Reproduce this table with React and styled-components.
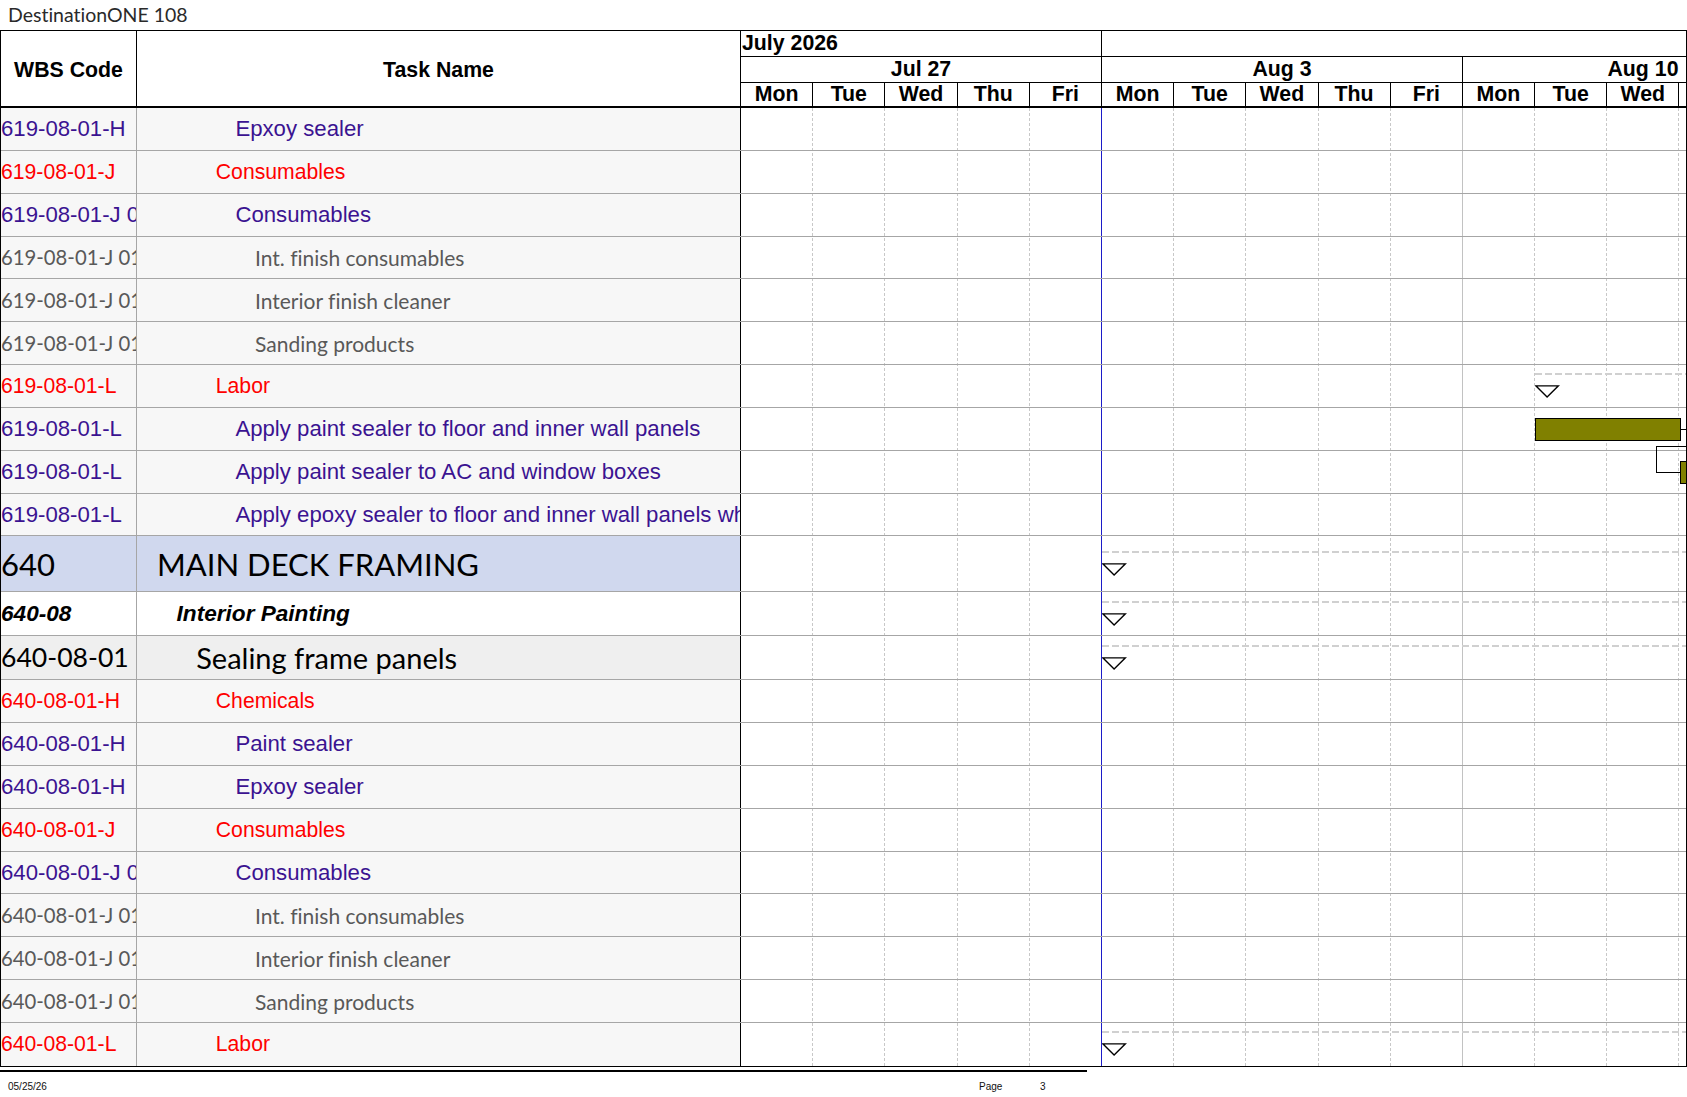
import styled, { createGlobalStyle } from "styled-components";

const DAY_W = 72.2;
const WEEK_W = DAY_W * 5;
const ROW_H = 42.85;
const ARIAL = `"Liberation Sans", Arial, sans-serif`;
const CALIBRI = `Lato, "Open Sans", sans-serif`;

const weeks = ["Jul 27", "Aug 3", "Aug 10"];
const dayNames = ["Mon", "Tue", "Wed", "Thu", "Fri"];
const STATUS_DAY = 5;

const kinds = {
  resource: { font: ARIAL, size: 22.2, color: "#3b1391", bg: "#f7f7f7" },
  group: { font: ARIAL, size: 21.2, color: "#ff0000", bg: "#f7f7f7" },
  item: { font: CALIBRI, size: 21, wbsSize: 20.3, color: "#595959", bg: "#f7f7f7" },
  phase: { font: CALIBRI, size: 31, color: "#000", bg: "#d0d8ee", h: 56 },
  area: { font: ARIAL, size: 22.6, color: "#000", bg: "#fff", h: 43.3, weight: 700, italic: true },
  task: { font: CALIBRI, size: 29, wbsSize: 26.6, color: "#000", bg: "#efefef", h: 44.5 },
};

const rows = [
  { wbs: "619-08-01-H", name: "Epxoy sealer", kind: "resource", level: 5 },
  { wbs: "619-08-01-J", name: "Consumables", kind: "group", level: 4 },
  { wbs: "619-08-01-J 01", name: "Consumables", kind: "resource", level: 5 },
  { wbs: "619-08-01-J 01-01", name: "Int. finish consumables", kind: "item", level: 6 },
  { wbs: "619-08-01-J 01-02", name: "Interior finish cleaner", kind: "item", level: 6 },
  { wbs: "619-08-01-J 01-03", name: "Sanding products", kind: "item", level: 6 },
  { wbs: "619-08-01-L", name: "Labor", kind: "group", level: 4, summary: 11 },
  { wbs: "619-08-01-L", name: "Apply paint sealer to floor and inner wall panels", kind: "resource", level: 5, bar: [11, 13] },
  { wbs: "619-08-01-L", name: "Apply paint sealer to AC and window boxes", kind: "resource", level: 5, bar: [13, 16] },
  { wbs: "619-08-01-L", name: "Apply epoxy sealer to floor and inner wall panels where needed", kind: "resource", level: 5 },
  { wbs: "640", name: "MAIN DECK FRAMING", kind: "phase", level: 1, summary: 5 },
  { wbs: "640-08", name: "Interior Painting", kind: "area", level: 2, summary: 5 },
  { wbs: "640-08-01", name: "Sealing frame panels", kind: "task", level: 3, summary: 5 },
  { wbs: "640-08-01-H", name: "Chemicals", kind: "group", level: 4 },
  { wbs: "640-08-01-H", name: "Paint sealer", kind: "resource", level: 5 },
  { wbs: "640-08-01-H", name: "Epxoy sealer", kind: "resource", level: 5 },
  { wbs: "640-08-01-J", name: "Consumables", kind: "group", level: 4 },
  { wbs: "640-08-01-J 01", name: "Consumables", kind: "resource", level: 5 },
  { wbs: "640-08-01-J 01-01", name: "Int. finish consumables", kind: "item", level: 6 },
  { wbs: "640-08-01-J 01-02", name: "Interior finish cleaner", kind: "item", level: 6 },
  { wbs: "640-08-01-J 01-03", name: "Sanding products", kind: "item", level: 6 },
  { wbs: "640-08-01-L", name: "Labor", kind: "group", level: 4, summary: 5 },
];

const heightOf = (row) => kinds[row.kind].h || ROW_H;
const rowTops = rows.reduce((acc, row, i) => {
  acc.push(i === 0 ? 0 : acc[i - 1] + heightOf(rows[i - 1]));
  return acc;
}, []);

const GlobalStyle = createGlobalStyle`
  html, body {
    margin: 0;
    padding: 0;
    background: #fff;
  }
  body {
    font-family: ${ARIAL};
    color: #000;
    font-variant-ligatures: none;
  }
  * {
    box-sizing: border-box;
  }
`;

const Page = styled.div`
  width: 1687px;
`;

const Title = styled.div`
  height: 30px;
  line-height: 30px;
  padding-left: 8px;
  font-family: ${CALIBRI};
  font-size: 19.5px;
  color: #2a2a2a;
`;

const Sheet = styled.div`
  display: flex;
  width: 1687px;
  border: 1px solid #000;
`;

const LeftPane = styled.div`
  width: 740px;
  flex-shrink: 0;
  display: flex;
  flex-direction: column;
`;

const LeftHead = styled.div`
  display: flex;
  height: 77px;
  border-bottom: 2px solid #000;
`;

const HeadCell = styled.div`
  width: ${(p) => p.$w}px;
  border-right: 1px solid #000;
  display: flex;
  align-items: center;
  justify-content: center;
  padding-top: 3px;
  font-family: ${ARIAL};
  font-weight: 700;
  font-size: 21.3px;
`;

const LeftRow = styled.div`
  display: flex;
  height: ${(p) => p.$h}px;
  background: ${(p) => p.$k.bg};
  border-bottom: ${(p) => (p.$last ? "none" : "1px solid #a6a6a6")};
  font-family: ${(p) => p.$k.font};
  font-size: ${(p) => p.$k.size}px;
  font-weight: ${(p) => p.$k.weight || 400};
  font-style: ${(p) => (p.$k.italic ? "italic" : "normal")};
  color: ${(p) => p.$k.color};
  white-space: nowrap;
`;

const WbsCell = styled.div`
  width: 136px;
  flex-shrink: 0;
  overflow: hidden;
  display: flex;
  align-items: center;
  font-size: ${(p) => (p.$size ? `${p.$size}px` : "inherit")};
  border-right: 1px solid #a6a6a6;
`;

const TaskCell = styled.div`
  width: 604px;
  flex-shrink: 0;
  overflow: hidden;
  display: flex;
  align-items: center;
  padding-left: ${(p) => 20 + (p.$level - 1) * 19.6}px;
  border-right: 1px solid #000;
`;

const GanttPane = styled.div`
  flex: 1;
  overflow: hidden;
  display: flex;
  flex-direction: column;
`;

const Track = styled.div`
  width: ${WEEK_W * 3}px;
  position: relative;
`;

const HeadRow = styled.div`
  display: flex;
  height: ${(p) => p.$h}px;
  border-bottom: ${(p) => p.$border}px solid #000;
  font-family: ${ARIAL};
  font-weight: 700;
  font-size: 21.3px;
`;

const MonthCell = styled.div`
  width: ${(p) => (p.$w ? `${p.$w}px` : "auto")};
  flex: ${(p) => (p.$w ? "none" : 1)};
  border-right: ${(p) => (p.$w ? "1px solid #000" : "none")};
  display: flex;
  align-items: center;
  padding-left: 1px;
`;

const TimeCell = styled.div`
  width: ${(p) => p.$w}px;
  flex-shrink: 0;
  border-right: 1px solid #000;
  display: flex;
  align-items: center;
  justify-content: center;
`;

const GridLayer = styled.div`
  position: absolute;
  inset: 0;
  display: flex;
`;

const lineFor = (type) =>
  type === "status"
    ? "1px solid #1c1cc8"
    : type === "week"
    ? "1px solid #c2c2c2"
    : "1px dashed #c8c8c8";

const GridCol = styled.div`
  width: ${DAY_W}px;
  flex-shrink: 0;
  border-right: ${(p) => lineFor(p.$type)};
`;

const GanttRow = styled.div`
  position: relative;
  height: ${(p) => p.$h}px;
  border-bottom: ${(p) => (p.$last ? "none" : "1px solid #a6a6a6")};
`;

const Summary = styled.div`
  position: absolute;
  right: 0;
  height: 24px;
`;

const DashLine = styled.div`
  height: 2px;
  background: repeating-linear-gradient(90deg, #d0d0d0 0 7px, transparent 7px 10px);
`;

const Marker = styled.svg`
  display: block;
  margin-top: 10px;
`;

const Bar = styled.div`
  position: absolute;
  height: 23px;
  background: #808000;
  border: 1px solid #000;
`;

const Links = styled.svg`
  position: absolute;
  left: 0;
  top: 0;
  pointer-events: none;
`;

const Footer = styled.footer`
  display: grid;
  grid-template-columns: 971px 61px auto;
  align-items: center;
  width: 1087px;
  height: 29px;
  margin-top: 3px;
  padding: 3px 0 0 8px;
  border-top: 2px solid #000;
  font-family: ${ARIAL};
  font-size: 10px;
  color: #111;
`;

function SummaryMarker({ day, height }) {
  return (
    <Summary style={{ left: day * DAY_W, top: height / 2 - 13 }}>
      <DashLine />
      <Marker width="25" height="13" viewBox="0 0 25 13">
        <polygon points="0.8,0.8 23.4,0.8 12.1,12" fill="#fff" stroke="#000" strokeWidth="1.3" />
      </Marker>
    </Summary>
  );
}

function GanttBody() {
  const total = rowTops[rowTops.length - 1] + heightOf(rows[rows.length - 1]);
  const barMid = (i) => rowTops[i] + heightOf(rows[i]) / 2;
  return (
    <Track>
      <GridLayer>
        {Array.from({ length: 15 }, (_, i) => (
          <GridCol
            key={i}
            $type={i === STATUS_DAY - 1 ? "status" : i % 5 === 4 ? "week" : "day"}
          />
        ))}
      </GridLayer>
      {rows.map((row, i) => {
        const h = heightOf(row);
        return (
          <GanttRow key={i} $h={h} $last={i === rows.length - 1}>
            {row.summary !== undefined && <SummaryMarker day={row.summary} height={h} />}
            {row.bar && (
              <Bar
                style={{
                  left: row.bar[0] * DAY_W,
                  width: (row.bar[1] - row.bar[0]) * DAY_W + 1,
                  top: h / 2 - 11.5,
                }}
              />
            )}
          </GanttRow>
        );
      })}
      <Links width={WEEK_W * 3} height={total} shapeRendering="crispEdges">
        <path
          d={`M ${13 * DAY_W} ${barMid(7)} H ${14 * DAY_W}`}
          fill="none"
          stroke="#000"
          strokeWidth="1"
        />
        <path
          d={`M ${14 * DAY_W} ${rowTops[8] - 4} H ${13 * DAY_W - 23} V ${barMid(8)} H ${13 * DAY_W}`}
          fill="none"
          stroke="#000"
          strokeWidth="1"
        />
      </Links>
    </Track>
  );
}

export default function App() {
  return (
    <Page>
      <GlobalStyle />
      <Title>DestinationONE 108</Title>
      <Sheet>
        <LeftPane>
          <LeftHead>
            <HeadCell $w={136}>WBS Code</HeadCell>
            <HeadCell $w={604}>Task Name</HeadCell>
          </LeftHead>
          {rows.map((row, i) => {
            const k = kinds[row.kind];
            return (
              <LeftRow key={i} $h={heightOf(row)} $k={k} $last={i === rows.length - 1}>
                <WbsCell $size={k.wbsSize}>{row.wbs}</WbsCell>
                <TaskCell $level={row.level}>{row.name}</TaskCell>
              </LeftRow>
            );
          })}
        </LeftPane>
        <GanttPane>
          <Track>
            <HeadRow $h={26} $border={1}>
              <MonthCell $w={WEEK_W}>July 2026</MonthCell>
              <MonthCell />
            </HeadRow>
            <HeadRow $h={26} $border={1}>
              {weeks.map((w) => (
                <TimeCell key={w} $w={WEEK_W}>
                  {w}
                </TimeCell>
              ))}
            </HeadRow>
            <HeadRow $h={25} $border={2}>
              {weeks.flatMap((w) =>
                dayNames.map((d) => (
                  <TimeCell key={w + d} $w={DAY_W}>
                    {d}
                  </TimeCell>
                ))
              )}
            </HeadRow>
          </Track>
          <GanttBody />
        </GanttPane>
      </Sheet>
      <Footer>
        <span>05/25/26</span>
        <span>Page</span>
        <span>3</span>
      </Footer>
    </Page>
  );
}
